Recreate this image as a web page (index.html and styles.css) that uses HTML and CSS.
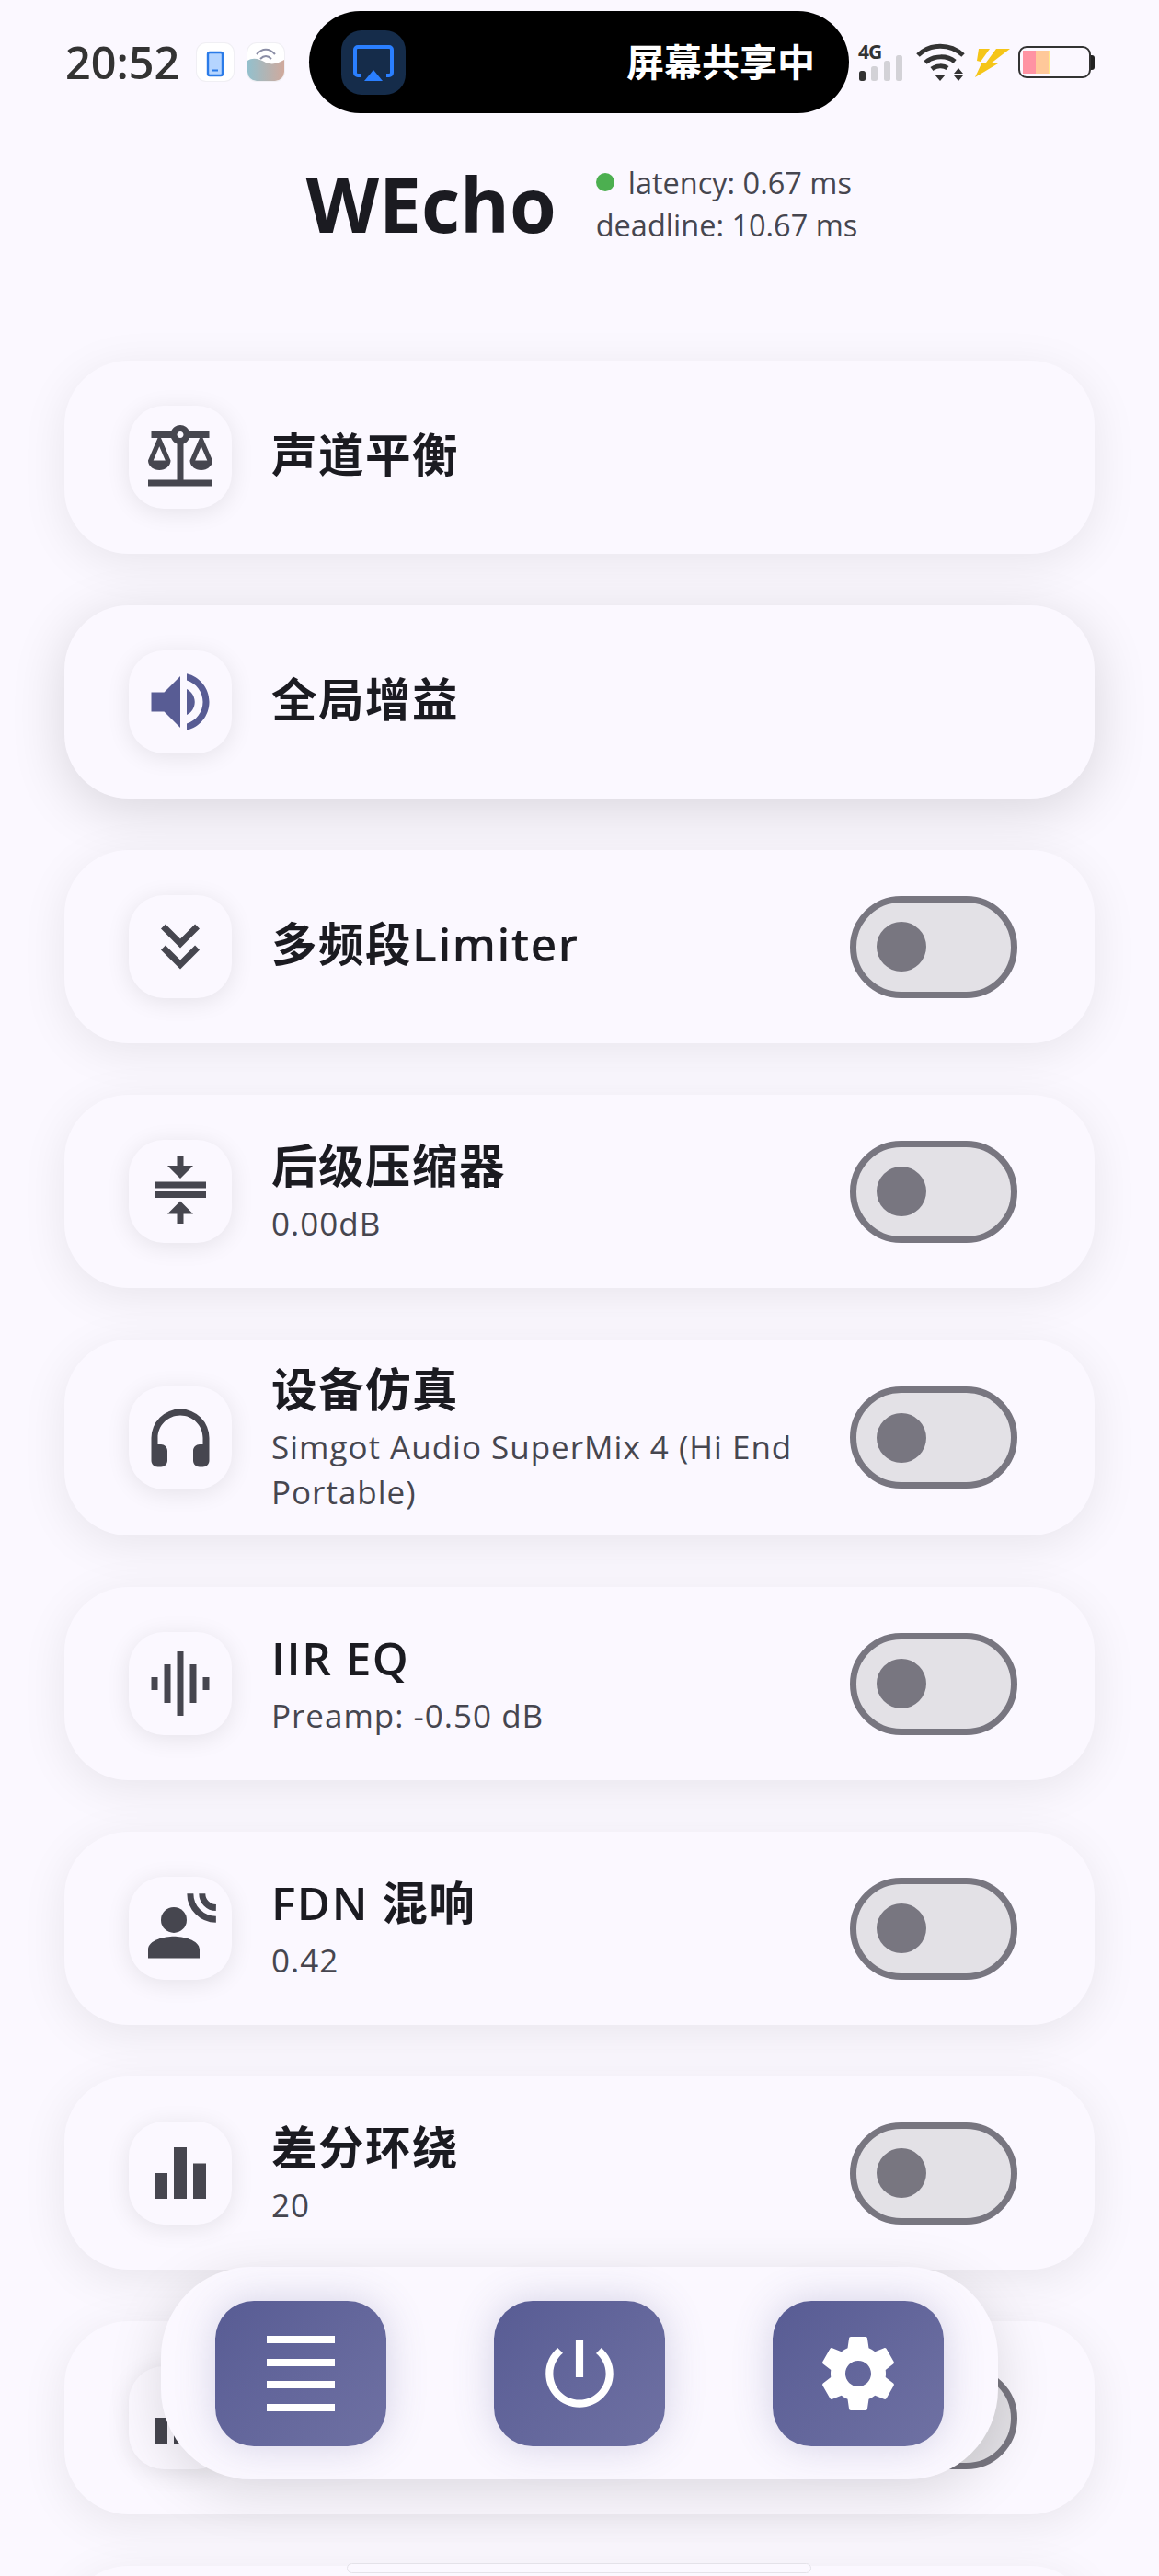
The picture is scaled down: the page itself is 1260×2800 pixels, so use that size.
FILE: index.html
```html
<!DOCTYPE html>
<html lang="zh">
<head>
    <meta charset="UTF-8">
    <meta name="viewport" content="width=device-width, initial-scale=1.0">
    <title>WEcho</title>
    <link rel="stylesheet" href="styles.css">
</head>
<body>
    <div class="status-bar">
        <span class="clock">20:52</span>
        <div class="app-icon">
            <svg viewBox="0 0 40 41" width="40" height="41">
                <rect x="12" y="10" width="16" height="25" rx="2" fill="#b5d5ff" stroke="#2a7be8" stroke-width="2.4"/>
                <rect x="17" y="28.5" width="6" height="2" fill="#2a7be8"/>
            </svg>
        </div>
        <div class="app-icon wave-icon">
            <svg viewBox="0 0 40 41" width="40" height="41">
                <defs>
                    <linearGradient id="waveFill" x1="0" y1="0" x2="1" y2="0">
                        <stop offset="0" stop-color="#93c0cd"/>
                        <stop offset="1" stop-color="#d0a99c"/>
                    </linearGradient>
                </defs>
                <path d="M0 19c6-4 13-2 20 2 7 3 13 1 20-3v15a8 8 0 0 1-8 8H8a8 8 0 0 1-8-8z" fill="url(#waveFill)"/>
                <path d="M10 12c6-7 14-7 20 0M14 17c4-4 8-4 12 0" fill="none" stroke="#8a8da5" stroke-width="2"/>
            </svg>
        </div>
        <div class="island">
            <div class="cast-icon">
                <svg viewBox="0 0 70 70" width="70" height="70">
                    <path d="M21 49h-3a3 3 0 0 1-3-3V21a3 3 0 0 1 3-3h34a3 3 0 0 1 3 3v25a3 3 0 0 1-3 3h-3" fill="none" stroke="#2a7fff" stroke-width="4"/>
                    <path d="M35 43l10 12H25z" fill="#2a7fff"/>
                </svg>
            </div>
            <span class="island-text">屏幕共享中</span>
        </div>
        <div class="signal">
            <span class="net-type">4G</span>
            <svg viewBox="0 0 48 28" width="48" height="28">
                <rect x="0" y="17" width="7" height="11" rx="2.5" fill="#333"/>
                <rect x="13" y="12" width="7" height="16" rx="2.5" fill="#d3d2d7"/>
                <rect x="27" y="6" width="7" height="22" rx="2.5" fill="#d3d2d7"/>
                <rect x="40" y="0" width="7" height="28" rx="2.5" fill="#d3d2d7"/>
            </svg>
        </div>
        <svg class="wifi" viewBox="0 0 53 41" width="53" height="41">
            <path d="M2 13C15 0 37 0 51 13M10 21c9-8 24-8 32-1M17 28c5-4 13-4 17-1" fill="none" stroke="#333" stroke-width="5"/>
            <path d="M20 34h12l-6 7zM46 27l5 6H41zM41 35h10l-5 6z" fill="#333"/>
        </svg>
        <svg class="bolt" viewBox="0 0 38 32" width="38" height="32">
            <path d="M4 1h12L6 15 2 14z" fill="#f5c518"/>
            <path d="M23 1h15L17 17h8L0 32l7-15 5-1z" fill="#f5c518"/>
        </svg>
        <div class="battery">
            <div class="battery-body">
                <span class="cell-red"></span>
                <span class="cell-orange"></span>
            </div>
            <span class="battery-cap"></span>
        </div>
    </div>

    <header class="app-header">
        <h1>WEcho</h1>
        <div class="stats">
            <div class="stat-line"><span class="dot"></span>latency: 0.67 ms</div>
            <div class="stat-line">deadline: 10.67 ms</div>
        </div>
    </header>

    <main class="card-list">
        <div class="card">
            <div class="icon-box">
                <svg viewBox="0 0 24 24"><path d="M13 7.83c.85-.3 1.53-.98 1.83-1.83H18l-3 7c0 1.66 1.57 3 3.5 3s3.5-1.34 3.5-3l-3-7h2V4h-6.17C14.42 2.83 13.31 2 12 2S9.58 2.83 9.17 4L3 4v2h2l-3 7c0 1.66 1.57 3 3.5 3S9 14.66 9 13L6 6h3.17c.3.85.98 1.53 1.83 1.83V19H2v2h20v-2h-9V7.83zM20.37 13h-3.74l1.87-4.36L20.37 13zM7.37 13H3.63L5.5 8.64 7.37 13zM12 6c-.55 0-1-.45-1-1s.45-1 1-1 1 .45 1 1-.45 1-1 1z"/></svg>
            </div>
            <div class="card-text">
                <div class="card-title">声道平衡</div>
            </div>
        </div>

        <div class="card card-active">
            <div class="icon-box">
                <svg class="icon-primary" viewBox="0 0 24 24"><path d="M3 9v6h4l5 5V4L7 9H3zm13.5 3c0-1.77-1.02-3.29-2.5-4.03v8.05c1.48-.73 2.5-2.25 2.5-4.02zM14 3.23v2.06c2.89.86 5 3.54 5 6.71s-2.11 5.85-5 6.71v2.06c4.01-.91 7-4.49 7-8.77s-2.99-7.86-7-8.77z"/></svg>
            </div>
            <div class="card-text">
                <div class="card-title">全局增益</div>
            </div>
        </div>

        <div class="card">
            <div class="icon-box">
                <svg viewBox="0 0 24 24"><path d="M18 6.41 16.59 5 12 9.58 7.41 5 6 6.41l6 6zM18 13l-1.41-1.41L12 16.17l-4.59-4.58L6 13l6 6z"/></svg>
            </div>
            <div class="card-text">
                <div class="card-title">多频段Limiter</div>
            </div>
            <div class="switch"><span class="thumb"></span></div>
        </div>

        <div class="card">
            <div class="icon-box">
                <svg viewBox="0 0 24 24"><path d="M8 19h3v3h2v-3h3l-4-4-4 4zm8-15h-3V1h-2v3H8l4 4 4-4zM4 9v2h16V9H4zm0 3h16v2H4z"/></svg>
            </div>
            <div class="card-text">
                <div class="card-title">后级压缩器</div>
                <div class="card-sub">0.00dB</div>
            </div>
            <div class="switch"><span class="thumb"></span></div>
        </div>

        <div class="card">
            <div class="icon-box">
                <svg viewBox="0 0 24 24"><path d="M12 3a9 9 0 0 0-9 9v7c0 1.1.9 2 2 2h1c1.1 0 2-.9 2-2v-3c0-1.1-.9-2-2-2H5v-2c0-3.87 3.13-7 7-7s7 3.13 7 7v2h-1c-1.1 0-2 .9-2 2v3c0 1.1.9 2 2 2h1c1.1 0 2-.9 2-2v-7a9 9 0 0 0-9-9z"/></svg>
            </div>
            <div class="card-text">
                <div class="card-title">设备仿真</div>
                <div class="card-sub">Simgot Audio SuperMix 4 (Hi End Portable)</div>
            </div>
            <div class="switch"><span class="thumb"></span></div>
        </div>

        <div class="card">
            <div class="icon-box">
                <svg viewBox="0 0 24 24"><path d="M7 18h2V6H7v12zm4 4h2V2h-2v20zm-8-8h2v-4H3v4zm12 4h2V6h-2v12zm4-8v4h2v-4h-2z"/></svg>
            </div>
            <div class="card-text">
                <div class="card-title">IIR EQ</div>
                <div class="card-sub">Preamp: -0.50 dB</div>
            </div>
            <div class="switch"><span class="thumb"></span></div>
        </div>

        <div class="card">
            <div class="icon-box">
                <svg viewBox="0 0 24 24">
                    <circle cx="10" cy="9.4" r="4"/>
                    <path d="M10 14.5c-2.67 0-8 1-8 4.2v2.6h16v-2.6c0-3.2-5.33-4.2-8-4.2z"/>
                    <path d="M15.1 1.2a8 8 0 0 0 8 8M18.8 1.2a4.4 4.4 0 0 0 4.3 4.4" fill="none" stroke="#46464f" stroke-width="2"/>
                </svg>
            </div>
            <div class="card-text">
                <div class="card-title">FDN 混响</div>
                <div class="card-sub">0.42</div>
            </div>
            <div class="switch"><span class="thumb"></span></div>
        </div>

        <div class="card">
            <div class="icon-box">
                <svg viewBox="0 0 24 24"><path d="M4 12h4v8H4zM10 4h4v16h-4zM16 9h4v11h-4z"/></svg>
            </div>
            <div class="card-text">
                <div class="card-title">差分环绕</div>
                <div class="card-sub">20</div>
            </div>
            <div class="switch"><span class="thumb"></span></div>
        </div>

        <div class="card">
            <div class="icon-box">
                <svg viewBox="0 0 24 24"><path d="M4 12h4v8H4zM10 4h4v16h-4zM16 9h4v11h-4z"/></svg>
            </div>
            <div class="card-text"></div>
            <div class="switch"><span class="thumb"></span></div>
        </div>

        <div class="card"></div>
    </main>

    <nav class="dock">
        <button class="dock-btn">
            <svg viewBox="0 0 74 82" width="74" height="82"><path d="M0 0h74v8H0zM0 25h74v8H0zM0 49h74v8H0zM0 74h74v8H0z"/></svg>
        </button>
        <button class="dock-btn">
            <svg viewBox="0 0 24 24" width="98" height="98"><path d="M13 3h-2v10h2V3zm4.83 2.17-1.42 1.42C17.99 7.86 19 9.81 19 12c0 3.87-3.13 7-7 7s-7-3.13-7-7c0-2.19 1.01-4.14 2.58-5.42L6.17 5.17C4.23 6.82 3 9.26 3 12c0 4.97 4.03 9 9 9s9-4.03 9-9c0-2.74-1.23-5.18-3.17-6.83z"/></svg>
        </button>
        <button class="dock-btn">
            <svg viewBox="0 0 24 24" width="96" height="96"><path d="M19.43 12.98c.04-.32.07-.64.07-.98s-.03-.66-.07-.98l2.11-1.65c.19-.15.24-.42.12-.64l-2-3.46c-.12-.22-.39-.3-.61-.22l-2.49 1c-.52-.4-1.08-.73-1.69-.98l-.38-2.65C14.46 2.18 14.25 2 14 2h-4c-.25 0-.46.18-.49.42l-.38 2.65c-.61.25-1.17.59-1.69.98l-2.49-1c-.23-.09-.49 0-.61.22l-2 3.46c-.13.22-.07.49.12.64l2.11 1.65c-.04.32-.07.65-.07.98s.03.66.07.98l-2.11 1.65c-.19.15-.24.42-.12.64l2 3.46c.12.22.39.3.61.22l2.49-1c.52.4 1.08.73 1.69.98l.38 2.65c.03.24.24.42.49.42h4c.25 0 .46-.18.49-.42l.38-2.65c.61-.25 1.17-.59 1.69-.98l2.49 1c.23.09.49 0 .61-.22l2-3.46c.12-.22.07-.49-.12-.64l-2.11-1.65zM12 15.5c-1.93 0-3.5-1.57-3.5-3.5s1.57-3.5 3.5-3.5 3.5 1.57 3.5 3.5-1.57 3.5-3.5 3.5z"/></svg>
        </button>
    </nav>

    <div class="home-bar"></div>
</body>
</html>
```

FILE: styles.css
```css
* {
    margin: 0;
    padding: 0;
    box-sizing: border-box;
}

body {
    font-family: "Open Sans", "Noto Sans CJK SC", sans-serif;
    background: #fbf8ff;
    color: #1b1b21;
    height: 2800px;
    overflow: hidden;
    position: relative;
}

/* status bar */
.status-bar {
    display: flex;
    align-items: center;
    height: 111px;
    margin-top: 12px;
    padding-left: 71px;
}

.clock {
    font-size: 48.5px;
    font-weight: 600;
    color: #333;
    width: 143px;
    line-height: 1;
}

.app-icon {
    width: 40px;
    height: 41px;
    background: white;
    border-radius: 10px;
    box-shadow: 0 0 0 1px #f0eff4;
    overflow: hidden;
    margin-right: 15px;
}

.wave-icon {
    margin-right: 27px;
}

.app-icon svg {
    display: block;
}

.island {
    display: flex;
    align-items: center;
    justify-content: space-between;
    width: 587px;
    height: 111px;
    background: #000;
    border-radius: 56px;
    padding: 0 37px 0 35px;
}

.cast-icon {
    width: 70px;
    height: 70px;
    background: #152c4a;
    border-radius: 22px;
}

.island-text {
    color: white;
    font-size: 41px;
    font-weight: 700;
    line-height: 1;
}

.signal {
    position: relative;
    width: 50px;
    height: 41px;
    margin-left: 11px;
    display: flex;
    flex-direction: column;
    justify-content: flex-end;
}

.signal svg {
    display: block;
}

.net-type {
    position: absolute;
    top: -2px;
    left: -1px;
    font-size: 21px;
    font-weight: 700;
    line-height: 22px;
    letter-spacing: -1px;
    color: #333;
}

.wifi {
    margin-left: 12px;
}

.bolt {
    margin-left: 11px;
}

.battery {
    display: flex;
    align-items: center;
    margin-left: 9px;
}

.battery-body {
    display: flex;
    width: 79px;
    height: 35px;
    border: 2px solid #333;
    border-radius: 9px;
    padding: 3px;
}

.cell-red {
    width: 14px;
    background: #ff93a3;
}

.cell-orange {
    width: 15px;
    background: #ffc89a;
    border-right: 1px solid #ffe98a;
}

.battery-cap {
    width: 4px;
    height: 16px;
    background: #222;
    border-radius: 0 3px 3px 0;
}

/* title row */
.app-header {
    display: flex;
    align-items: center;
    justify-content: center;
    gap: 43px;
    margin-top: 53px;
    padding-left: 5px;
}

h1 {
    font-size: 82px;
    font-weight: 700;
    line-height: 92px;
    margin-top: -3px;
    color: #1b1b21;
}

.stat-line {
    font-size: 32.5px;
    font-weight: 400;
    line-height: 46px;
    color: #46464f;
    white-space: nowrap;
}

.dot {
    display: inline-block;
    width: 20px;
    height: 20px;
    background: #4caf50;
    border-radius: 50%;
    margin-right: 15px;
    vertical-align: 3px;
}

/* settings cards */
.card-list {
    display: flex;
    flex-direction: column;
    gap: 56px;
    padding: 124px 70px 0;
}

.card {
    display: flex;
    align-items: center;
    flex-shrink: 0;
    min-height: 210px;
    padding: 17px 84px 17px 70px;
    background: #fbf8ff;
    border-radius: 70px;
    box-shadow: 0 10px 50px rgba(0, 0, 0, 0.08);
}

.card-active {
    box-shadow: 0 12px 60px rgba(0, 0, 0, 0.14);
}

.icon-box {
    display: flex;
    align-items: center;
    justify-content: center;
    flex-shrink: 0;
    width: 112px;
    height: 112px;
    background: #fbf8ff;
    border-radius: 38px;
    box-shadow: 0 4px 26px rgba(0, 0, 0, 0.09);
}

.icon-box svg {
    width: 84px;
    height: 84px;
    fill: #46464f;
}

.icon-box .icon-primary {
    fill: #585c94;
}

.card-text {
    flex: 1;
    margin: 0 24px 0 43px;
    padding-bottom: 6px;
}

.card-title {
    font-size: 49.5px;
    font-weight: 600;
    line-height: 75px;
    letter-spacing: 1.5px;
    color: #1b1b21;
}

.card-sub {
    font-size: 35px;
    font-weight: 400;
    line-height: 49px;
    letter-spacing: 1px;
    color: #46464f;
}

.switch {
    display: flex;
    align-items: center;
    flex-shrink: 0;
    width: 182px;
    height: 111px;
    padding-left: 22px;
    background: #e3e1e6;
    border: 7px solid #787680;
    border-radius: 56px;
}

.thumb {
    width: 54px;
    height: 54px;
    background: #787680;
    border-radius: 50%;
}

/* bottom bar floats over the list */
.dock {
    position: absolute;
    left: 175px;
    top: 2464px;
    display: flex;
    justify-content: space-between;
    align-items: center;
    width: 910px;
    height: 231px;
    padding: 0 59px;
    background: #fbf8ff;
    border-radius: 98px;
    box-shadow: 0 14px 60px rgba(0, 0, 0, 0.13);
}

.dock-btn {
    display: flex;
    align-items: center;
    justify-content: center;
    width: 186px;
    height: 158px;
    border: none;
    border-radius: 42px;
    background: linear-gradient(135deg, #585c94 0%, #6f71a3 100%);
    box-shadow: 0 0 44px rgba(88, 92, 148, 0.24);
}

.dock-btn svg {
    fill: white;
}

.home-bar {
    position: absolute;
    left: 377px;
    top: 2786px;
    width: 505px;
    height: 11px;
    background: #fbf8ff;
    border: 1px solid #e4e2e9;
    border-radius: 6px;
}
```
